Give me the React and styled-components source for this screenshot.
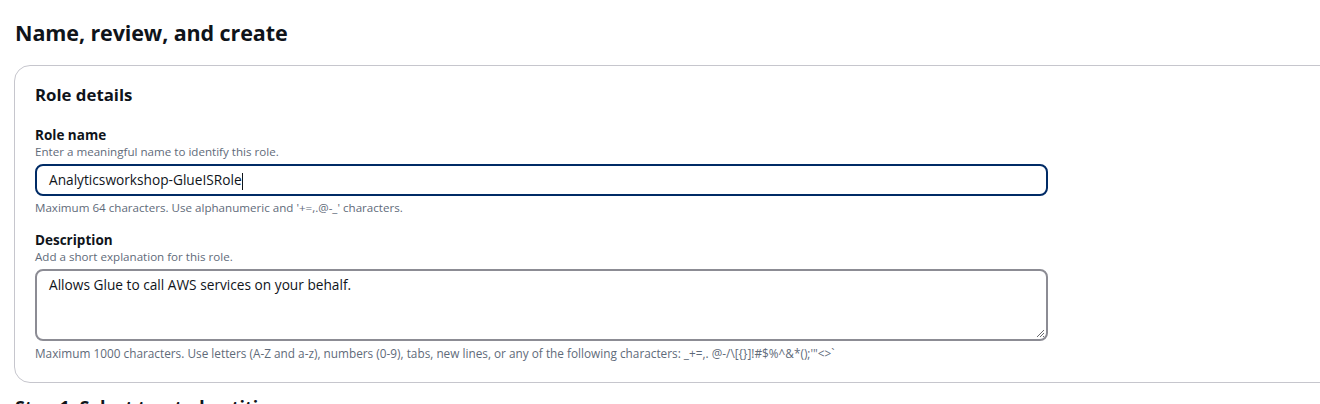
import React from "react";
import styled, { createGlobalStyle } from "styled-components";

const Global = createGlobalStyle`
  html, body { margin: 0; padding: 0; background: #ffffff; overflow: hidden; }
  body { font-family: "Open Sans", "Liberation Sans", Arial, sans-serif; color: #0f141a; }
`;

const Page = styled.div`
  width: 1400px;
  padding: 18px 0 0 15px;
  box-sizing: border-box;
`;

const PageTitle = styled.h1`
  margin: 0 0 17px 0;
  font-size: 21.5px;
  line-height: 30px;
  font-weight: 700;
  letter-spacing: -0.1px;
`;

const Container = styled.section`
  margin-left: -1px;
  width: 1360px;
  border: 1px solid #c6c6cd;
  border-radius: 16px;
  padding: 18px 20px 22px 20px;
  box-sizing: border-box;
`;

const SectionTitle = styled.h2`
  margin: 0 0 19px 0;
  font-size: 16.8px;
  line-height: 22px;
  font-weight: 700;
`;

const Field = styled.div`
  display: flex;
  flex-direction: column;
  width: 1013px;
  margin-bottom: ${(p) => p.$gap || 0}px;
`;

const Label = styled.label`
  font-size: 13.5px;
  line-height: 20px;
  font-weight: 700;
`;

const Hint = styled.div`
  font-size: ${(p) => p.$size || 11.6}px;
  line-height: 14px;
  color: #5f6b7a;
  margin-top: ${(p) => p.$top || 0}px;
`;

const Input = styled.div`
  margin-top: 5px;
  height: 32px;
  box-sizing: border-box;
  border: 2px solid #002b66;
  border-radius: 8px;
  padding: 0 12px;
  display: flex;
  align-items: center;
  font-size: 13.7px;
`;

const Caret = styled.span`
  display: inline-block;
  width: 1px;
  height: 17px;
  background: #0f141a;
  vertical-align: middle;
`;

const TextArea = styled.div`
  position: relative;
  margin-top: 5px;
  height: 72px;
  box-sizing: border-box;
  border: 2px solid #8c8c94;
  border-radius: 8px;
  padding: 4px 12px;
  font-size: 13.7px;
  line-height: 20px;
`;

const Grip = styled.svg`
  position: absolute;
  right: 1px;
  bottom: 1px;
`;

const NextTitle = styled.h2`
  margin: 12px 0 0 0;
  font-size: 18px;
  line-height: 24px;
  font-weight: 700;
`;

export default function App() {
  return (
    <>
      <Global />
      <Page>
        <PageTitle>Name, review, and create</PageTitle>
        <Container>
          <SectionTitle>Role details</SectionTitle>
          <Field $gap={15}>
            <Label>Role name</Label>
            <Hint>Enter a meaningful name to identify this role.</Hint>
            <Input>
              <span>
                Analyticsworkshop-GlueISRole
                <Caret />
              </span>
            </Input>
            <Hint $top={5}>Maximum 64 characters. Use alphanumeric and '+=,.@-_' characters.</Hint>
          </Field>
          <Field>
            <Label>Description</Label>
            <Hint>Add a short explanation for this role.</Hint>
            <TextArea>
              Allows Glue to call AWS services on your behalf.
              <Grip width="9" height="9" viewBox="0 0 9 9">
                <path d="M8 1 L1 8 M8 4 L4 8 M8 7 L7 8" stroke="#6b6b70" strokeWidth="1" />
              </Grip>
            </TextArea>
            <Hint $top={5} $size={11.8}>
              Maximum 1000 characters. Use letters (A-Z and a-z), numbers (0-9), tabs, new lines, or any of the following characters: _+=,. @-/\[{"{"}{"}"}]!#$%^&amp;*();'"&lt;&gt;`
            </Hint>
          </Field>
        </Container>
        <NextTitle>Step 1: Select trusted entities</NextTitle>
      </Page>
    </>
  );
}
